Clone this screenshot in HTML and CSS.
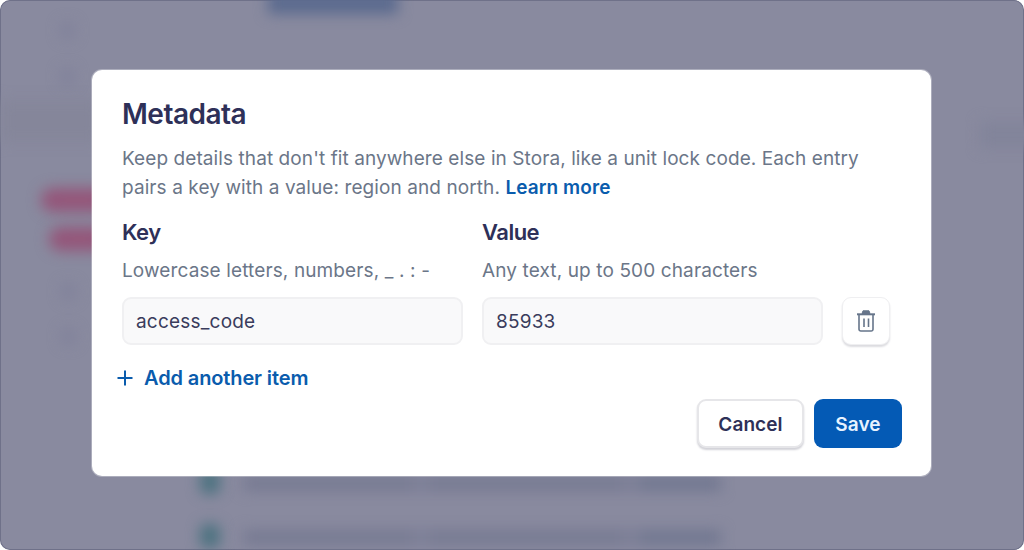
FILE: index.html
```html
<!DOCTYPE html>
<html lang="en">

<head>
    <meta charset="utf-8">
    <meta name="viewport" content="width=device-width, initial-scale=1.0">
    <title>Metadata</title>
    <link rel="stylesheet" href="styles.css">
</head>

<body>

    <div class="screen">
        <div class="backdrop" aria-hidden="true">
            <span class="blob tab"></span>
            <span class="blob dot dot-1"></span>
            <span class="blob dot dot-2"></span>
            <span class="blob band"></span>
            <span class="blob pill pill-1"></span>
            <span class="blob pill pill-2"></span>
            <span class="blob dot dot-3"></span>
            <span class="blob dot dot-4"></span>
            <span class="blob side"></span>
            <span class="blob check check-1"></span>
            <span class="blob check check-2"></span>
            <span class="blob line line-1"></span>
            <span class="blob line line-2"></span>
        </div>

        <section class="modal">
            <h1>Metadata</h1>
            <p class="intro">Keep details that don't fit anywhere else in Stora, like a unit lock code. Each entry<br>pairs a key with a value: region and north. <a href="#">Learn more</a></p>

            <div class="fields">
                <div class="field">
                    <h2>Key</h2>
                    <p class="hint">Lowercase letters, numbers, _ . : -</p>
                    <input type="text" value="access_code">
                </div>
                <div class="field">
                    <h2>Value</h2>
                    <p class="hint">Any text, up to 500 characters</p>
                    <input type="text" value="85933">
                </div>
                <button class="trash" aria-label="Delete">
                    <svg width="18" height="22" viewBox="0 0 18 22" fill="none" stroke="#66758a" stroke-width="1.6">
                        <path d="M5 3.500 6 .8h6l1 2.700z" fill="#66758a" stroke-width="1"/>
                        <path d="M0 4.300h18" stroke-width="2"/>
                        <path d="M2 5v14.200A1.800 1.800 0 0 0 3.800 21h10.400a1.800 1.800 0 0 0 1.800-1.800V5"/>
                        <path d="M7 8.500v8.500M11.500 8.500v8.500"/>
                    </svg>
                </button>
            </div>

            <a class="add" href="#">
                <svg width="16" height="16" viewBox="0 0 16 16" stroke="#0a5cad" stroke-width="2">
                    <path d="M8 .5v15M.5 8h15"/>
                </svg>
                Add another item
            </a>

            <div class="actions">
                <button class="btn cancel">Cancel</button>
                <button class="btn save">Save</button>
            </div>
        </section>
    </div>

</body>

</html>
```

FILE: styles.css
```css
* {
    box-sizing: border-box;
}

html,
body {
    margin: 0;
    padding: 0;
    background: #fff;
}

.screen {
    position: relative;
    width: 1024px;
    height: 550px;
    overflow: hidden;
    border-radius: 10px;
    background: #898a9f;
    padding: 70px 92px 0;
    font-family: Inter, "Noto Sans", sans-serif;
}

/* blurred page behind the dialog */
.backdrop {
    position: absolute;
    inset: 0;
    overflow: hidden;
    border-radius: 10px;
    box-shadow: inset 0 0 0 1px #6f7189;
}

.blob {
    position: absolute;
    filter: blur(7px);
}

.tab {
    left: 268px;
    top: -8px;
    width: 130px;
    height: 22px;
    background: #5a6a8e;
}

.dot {
    width: 15px;
    height: 17px;
    border-radius: 50%;
    background: #80819a;
}

.dot-1 { left: 60px; top: 22px; }
.dot-2 { left: 60px; top: 68px; }
.dot-3 { left: 61px; top: 283px; }
.dot-4 { left: 61px; top: 328px; }

.band {
    left: 0;
    top: 100px;
    width: 100px;
    height: 42px;
    background: #85869a;
}

.pill {
    height: 24px;
    border-radius: 12px;
    background: #94567a;
}

.pill-1 { left: 41px; top: 188px; width: 70px; }
.pill-2 { left: 49px; top: 227px; width: 60px; }

.side {
    left: 980px;
    top: 122px;
    width: 60px;
    height: 26px;
    background: #82849a;
}

.check {
    left: 200px;
    width: 20px;
    height: 24px;
    border-radius: 6px;
    background: #4c7280;
}

.check-1 { top: 470px; }
.check-2 { top: 524px; }

.line {
    left: 243px;
    width: 478px;
    height: 15px;
    background: linear-gradient(90deg, #777a92 0 35%, #7f8199 37%, #777a92 40% 79%, #7f8199 81%, #717790 84%);
}

.line-1 { top: 476px; }
.line-2 { top: 530px; }

.modal {
    position: relative;
    width: 839px;
    height: 406px;
    background: #fff;
    border-radius: 10px;
    box-shadow: 0 0 0 1px rgba(255, 255, 255, 0.3);
    padding: 26px 29px 28px 30px;
    display: flex;
    flex-direction: column;
}

h1 {
    margin: 0;
    font-size: 28px;
    line-height: 36px;
    font-weight: 600;
    letter-spacing: -0.5px;
    color: #2e3058;
}

.intro {
    margin: 12px 0 0;
    font-size: 19px;
    line-height: 29px;
    letter-spacing: 0.085px;
    color: #6b7688;
    white-space: nowrap;
}

.intro a {
    color: #0a5cad;
    font-weight: 600;
    text-decoration: none;
}

.fields {
    display: flex;
    align-items: flex-end;
    gap: 19px;
    margin-top: 14px;
}

.field {
    width: 341px;
}

h2 {
    margin: 0;
    font-size: 22px;
    line-height: 32px;
    font-weight: 600;
    letter-spacing: -0.5px;
    color: #2e3058;
}

.hint {
    margin: 8px 0 0;
    font-size: 19px;
    line-height: 30px;
    letter-spacing: 0.12px;
    color: #6b7688;
}

input {
    display: block;
    width: 100%;
    height: 48px;
    margin-top: 11px;
    padding: 1px 12px 0;
    border: 2px solid #f0f0f2;
    border-radius: 9px;
    background: #f9f9fa;
    font-family: inherit;
    font-size: 19px;
    letter-spacing: 0.2px;
    color: #3a3c5c;
}

.trash {
    width: 48px;
    height: 48px;
    padding: 0;
    display: flex;
    align-items: center;
    justify-content: center;
    border: 1px solid #efeff1;
    border-radius: 9px;
    background: #fff;
    box-shadow: 0 2px 2px #dcdce0;
}

.add {
    display: flex;
    align-items: center;
    gap: 11px;
    margin: 21px 0 0 -5px;
    font-size: 20px;
    line-height: 24px;
    font-weight: 600;
    letter-spacing: -0.12px;
    color: #0a5cad;
    text-decoration: none;
}

.actions {
    display: flex;
    justify-content: flex-end;
    gap: 10px;
    margin-top: 9px;
}

.btn {
    height: 49px;
    padding: 1px 0 0;
    border-radius: 9px;
    font-family: inherit;
    font-size: 19px;
    letter-spacing: 0.1px;
    font-weight: 600;
}

.cancel {
    width: 107px;
    border: 2px solid #e6e6e9;
    background: #fff;
    color: #2e3058;
    box-shadow: 0 2px 2px #d2d2d8;
}

.save {
    width: 88px;
    border: 0;
    background: #045ab5;
    color: #e8f3ff;
}
```
